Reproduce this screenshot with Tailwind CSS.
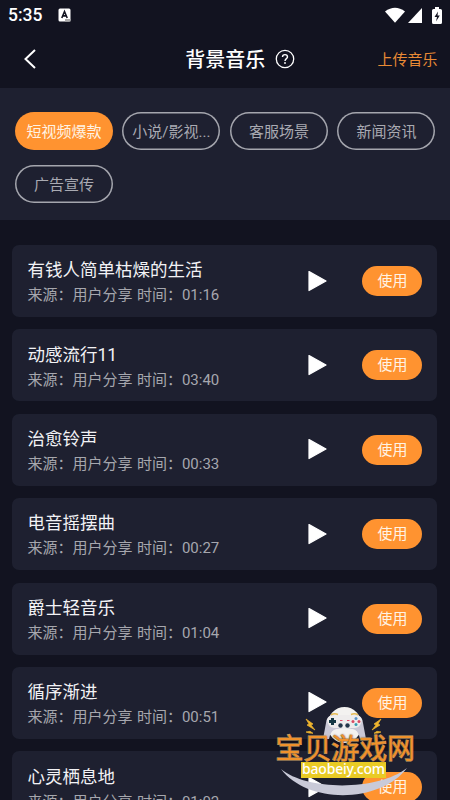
<!DOCTYPE html>
<html lang="zh-CN">
<head>
<meta charset="utf-8">
<title>背景音乐</title>
<script src="https://cdn.jsdelivr.net/npm/@tailwindcss/browser@4"></script>
</head>
<body class="relative w-[450px] h-[800px] overflow-hidden bg-[#121320] font-[Roboto,'Noto_Sans_CJK_SC',sans-serif] text-white">
<header class="h-[30px] flex items-center justify-between pl-2 pr-2">
  <div class="flex items-center gap-[16px] pt-[1px]">
    <span class="text-[17.500px] font-medium leading-none pt-[1px]">5:35</span>
    <svg class="-mt-[1px]" width="13" height="14" viewBox="0 0 13 14"><rect x=".5" y=".5" width="12" height="13" rx="1.500" fill="#fff"/><path d="M7 11h5.500v2.500H7z" fill="#aaa"/><path d="M3.800 10 6.500 3.500 9.200 10M4.800 7.900h3.400" fill="none" stroke="#121320" stroke-width="1.600"/></svg>
  </div>
  <div class="flex items-center">
    <svg width="20" height="16" viewBox="0 0 20 16"><path d="M0 4.500Q10-3 20 4.500L10 15.700Z" fill="#fff"/></svg>
    <svg class="ml-[3px]" width="14" height="15" viewBox="0 0 14 15"><path d="M14 0v15H0Z" fill="#fff"/></svg>
    <svg class="ml-[10px]" width="10" height="17" viewBox="0 0 10 17"><path d="M3 0h4v2h1.500Q10 2 10 3.500v12Q10 17 8.500 17h-7Q0 17 0 15.500v-12Q0 2 1.500 2H3Z" fill="#fff"/><path d="M6 4.500 2.500 10H5l-1 4.500L7.800 8.500H5.500Z" fill="#121320"/></svg>
  </div>
</header>
<nav class="h-[58px] grid grid-cols-[1fr_auto_1fr] items-center pl-[24px] pr-[12.5px]">
  <svg width="12" height="20" viewBox="0 0 12 20" fill="none" stroke="#fff" stroke-width="2"><path d="M11 1 1.500 10 11 19"/></svg>
  <div class="flex items-center gap-[10px] ml-[19px]">
    <h1 class="text-[20px] leading-[28px] pt-[1px] font-medium whitespace-nowrap">背景音乐</h1>
    <svg width="20" height="20" viewBox="0 0 20 20" fill="none" stroke="#fff"><circle cx="10" cy="10" r="8.700" stroke-width="1.300"/><path d="M7.500 8Q7.500 5.600 10 5.600T12.500 8C12.500 9.700 10 9.700 10 12" stroke-width="1.400"/><circle cx="10" cy="14" r=".9" fill="#fff" stroke="none"/></svg>
  </div>
  <a class="justify-self-end text-[15px] leading-[22px] pt-[1px] text-[#e88a35] whitespace-nowrap">上传音乐</a>
</nav>
<section class="h-[132px] bg-[#1e2030] pt-[24px] pl-[14.9px] flex flex-wrap content-start gap-x-[9.500px] gap-y-[15px] text-[15px] text-[#a9aab2]">
  <div class="w-[98px] h-[38px] pt-[2px] rounded-full flex items-center justify-center bg-[#ff9330] text-[#fff3e4]">短视频爆款</div>
  <div class="w-[98px] h-[38px] pt-[2px] rounded-full flex items-center justify-center shadow-[inset_0_0_0_1.5px_#a5a6ae]">小说/影视...</div>
  <div class="w-[98px] h-[38px] pt-[2px] rounded-full flex items-center justify-center shadow-[inset_0_0_0_1.5px_#a5a6ae]">客服场景</div>
  <div class="w-[98px] h-[38px] pt-[2px] rounded-full flex items-center justify-center shadow-[inset_0_0_0_1.5px_#a5a6ae]">新闻资讯</div>
  <div class="w-[98px] h-[38px] pt-[2px] rounded-full flex items-center justify-center shadow-[inset_0_0_0_1.5px_#a5a6ae]">广告宣传</div>
</section>
<main id="tracks" class="pt-[25px] pl-[12.4px] pr-[12.6px] flex flex-col gap-[12.4px]"></main>

<!-- Site badge floating over the list -->
<div class="absolute left-[265px] top-[700px] w-[185px] h-[100px]">
  <svg class="absolute inset-0" width="185" height="100" viewBox="0 0 185 100">
    <path d="M16 69C42 91 113 91 142 68C116 103 43 105 16 69Z" fill="#c9cad8"/>
    <ellipse cx="79.500" cy="25" rx="17" ry="18" fill="#f3f2f0"/>
    <path d="M61 23Q62 14 70 15H89Q97 14 98 23L101 39H95Q93 29 87 29H72Q66 29 64 39H58Z" fill="#c9c8d6"/>
    <ellipse cx="79.500" cy="34" rx="13" ry="6" fill="#f3f2f0"/>
    <path d="M62 20Q63 15 70 15H89Q96 15 97 20Q96 27 90 28H69Q63 27 62 20Z" fill="#eeecec"/>
    <path d="M66 15q3-2 7-.5M86 14.500q4-1.500 7 .5" stroke="#e5b950" stroke-width="1.500" fill="none"/>
    <path d="M67.500 18v7M64 21.500h7" stroke="#163844" stroke-width="3"/>
    <circle cx="91" cy="18.500" r="1.500" fill="#5a94c8"/><circle cx="88" cy="21.500" r="1.500" fill="#d84b63"/><circle cx="94" cy="21.500" r="1.500" fill="#d84b63"/><circle cx="91" cy="24.500" r="1.500" fill="#359eb0"/>
    <path d="M75 20.500h2.500M82 20.500h2.500" stroke="#e2506b" stroke-width="1.200"/>
    <circle cx="75.500" cy="25.500" r="2.200" fill="#24374a"/><circle cx="82.500" cy="25.500" r="2.200" fill="#24374a"/>
    <path d="M41 19l7 5-2 1 4 5-8-5 2-1ZM116 19l-7 5 2 1-4 5 8-5-2-1ZM41 32l4-.7 3 2-4-.3ZM116 32l-4-.7-3 2 4-.3Z" fill="#efb52e" stroke="#efb52e" stroke-width=".7"/>
  </svg>
  <div class="absolute left-[36px] top-[62px] w-[85px] h-[16px] bg-[#e9cb25] text-center text-[14px] leading-[14px] font-medium font-['Noto_Sans',sans-serif] tracking-[-.2px] whitespace-nowrap">baobeiy.com</div>
  <div class="absolute left-[10.5px] top-[34px] text-[27.900px] leading-[26px] font-normal whitespace-nowrap text-[#f0922c] [-webkit-text-stroke:1px_#f6cb8c] [paint-order:stroke_fill] [text-shadow:0_0_2px_#3a2413] font-['Noto_Sans_CJK_SC',sans-serif]">宝贝游戏网</div>
</div>
<script>
const tracks = [['有钱人简单枯燥的生活','01:16'],['动感流行11','03:40'],['治愈铃声','00:33'],['电音摇摆曲','00:27'],['爵士轻音乐','01:04'],['循序渐进','00:51'],['心灵栖息地','01:02']];
document.getElementById('tracks').innerHTML = tracks.map(([name, time]) => `
  <article class="h-[72px] shrink-0 rounded-[7px] bg-[#1e2030] flex items-center pl-[15px] pr-[15px]">
    <div class="flex-1 whitespace-nowrap pt-[2.5px]">
      <h2 class="text-[17.500px] leading-[26px] text-[#f2f2f5]">${name}</h2>
      <p class="text-[15px] leading-[24px] text-[#a6a7ae] [word-spacing:.8px]">来源：用户分享 时间：${time}</p>
    </div>
    <svg class="mr-[35.5px]" width="19" height="21" viewBox="0 0 19 21"><path d="M1 .5 18 10 1 19.500Z" fill="#fff" stroke="#fff" stroke-width="1.200" stroke-linejoin="round"/></svg>
    <button class="w-[60px] h-[30px] rounded-full bg-[#ff9330] text-[#fff3e4] text-[15px] leading-[31px]">使用</button>
  </article>`).join('');
</script>
</body>
</html>
